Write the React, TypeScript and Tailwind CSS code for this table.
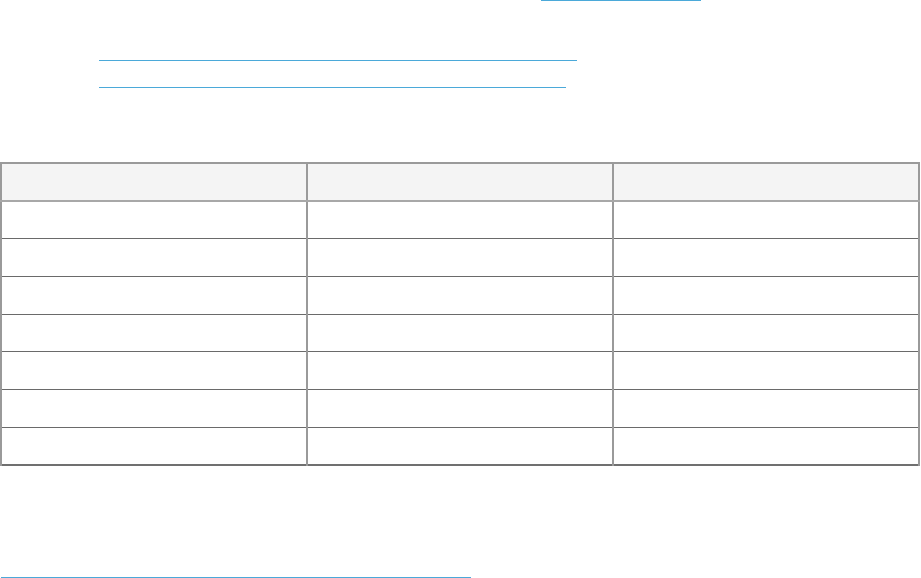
import React from 'react';

const rows = Array.from({ length: 7 }, (_, i) => i);

export default function App() {
  return (
    <div className="w-[921px] h-[578px] flex flex-col bg-white overflow-hidden font-['Liberation_Sans',sans-serif] text-white">
      <div className="ml-[541px] w-[160px] h-px bg-[#4ba9d9]" />
      <div className="mt-[59px] ml-[99px] w-[478px] h-px bg-[#4ba9d9]" />
      <div className="mt-[26px] ml-[99px] w-[467px] h-px bg-[#4ba9d9]" />

      <table className="mt-[74px] w-[920px] border-collapse border-2 border-[#707070]">
        <thead>
          <tr className="h-[37.75px] bg-[#f4f4f4]">
            {[0, 1, 2].map((c) => (
              <th key={c} className="w-1/3 border-2 border-[#9a9a9a] border-b-[#a8a8a8]" />
            ))}
          </tr>
        </thead>
        <tbody>
          {rows.map((r) => (
            <tr key={r} className="h-[37.75px]">
              {[0, 1, 2].map((c) => (
                <td key={c} className="w-1/3 border-y border-x-2 border-y-[#6a6a6a] border-x-[#9a9a9a]" />
              ))}
            </tr>
          ))}
        </tbody>
      </table>

      <div className="mt-auto ml-px w-[470px] h-px shrink-0 bg-[#4ba9d9]" />
    </div>
  );
}
